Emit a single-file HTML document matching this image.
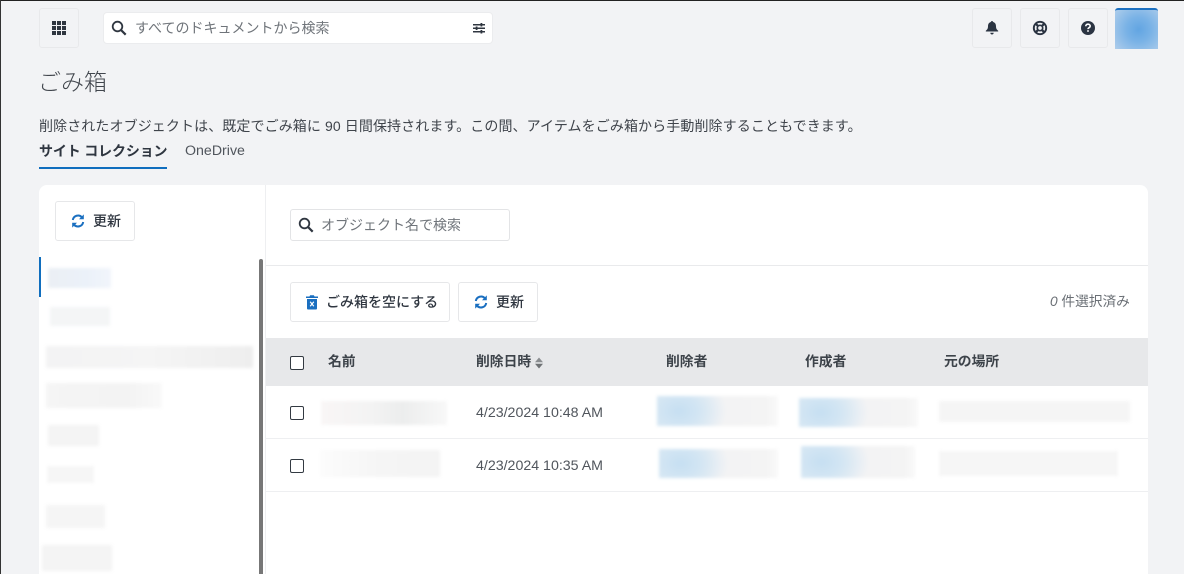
<!DOCTYPE html>
<html lang="ja">
<head>
<meta charset="utf-8">
<title>ごみ箱</title>
<style>
html,body{margin:0;padding:0;width:1184px;height:574px;overflow:hidden;}
body{background:#f2f3f5;position:relative;font-family:"Liberation Sans","Noto Sans CJK JP",sans-serif;color:#2f3640;}
.a{position:absolute;box-sizing:border-box;}
.t{position:absolute;white-space:nowrap;line-height:20px;}
.ib{position:absolute;box-sizing:border-box;width:40px;height:40px;top:8px;border:1px solid #e8e9eb;border-radius:3px;background:#f2f3f5;}
.ib svg{position:absolute;left:9px;top:9px;}
.btn{position:absolute;box-sizing:border-box;height:40px;background:#fff;border:1px solid #e6e7e9;border-radius:3px;}
.cb{position:absolute;box-sizing:border-box;width:14px;height:14px;border:1.3px solid #333a42;border-radius:2px;background:#fff;}
.b{position:absolute;filter:blur(1.5px);}
.g1{background:linear-gradient(90deg,#f9f6f6,#f3f3f3 40%,#eceded 65%,#f8f8f8);}
.row-blue{background:radial-gradient(ellipse 48px 36px at 18% 50%,#c6dff2 0%,#d2e5f3 40%,rgba(243,244,245,0) 100%),linear-gradient(90deg,#e0ecf5,#f3f3f4 50%,#f4f4f4 90%,#f9f9f9);}
.h{font-size:13.800px;font-weight:700;color:#3d434a;top:352px;}
</style>
</head>
<body>
<div class="a" style="left:0;top:0;width:1184px;height:1px;background:#222;"></div>
<div class="a" style="left:0;top:0;width:1px;height:574px;background:#333;"></div>

<div class="ib" style="left:39px;">
<svg width="20" height="20" viewBox="0 0 20 20" fill="#2f3640"><rect x="3" y="3" width="4" height="4"/><rect x="8" y="3" width="4" height="4"/><rect x="13" y="3" width="4" height="4"/><rect x="3" y="8" width="4" height="4"/><rect x="8" y="8" width="4" height="4"/><rect x="13" y="8" width="4" height="4"/><rect x="3" y="13" width="4" height="4"/><rect x="8" y="13" width="4" height="4"/><rect x="13" y="13" width="4" height="4"/></svg>
</div>

<div class="a" style="left:103px;top:12px;width:390px;height:32px;background:#fff;border:1px solid #ebecee;border-radius:4px;"></div>
<svg class="a" style="left:111px;top:20px" width="16" height="16" viewBox="0 0 16 16" fill="none" stroke="#2f3640" stroke-width="1.800"><circle cx="6.500" cy="6.500" r="4.800"/><path d="M10 10l4.700 4.700" stroke-width="2.200"/></svg>
<div class="t" style="left:135px;top:18px;font-size:14px;color:#6f747a;">すべてのドキュメントから検索</div>
<svg class="a" style="left:472px;top:22px" width="14" height="13" viewBox="0 0 14 13" fill="#2f3640"><rect x="1" y="2" width="12" height="1.500"/><rect x="8.500" y="1" width="1.800" height="3.500"/><rect x="1" y="5.500" width="12" height="1.500"/><rect x="3.700" y="4.500" width="1.800" height="3.500"/><rect x="1" y="9" width="12" height="1.500"/><rect x="8.500" y="8" width="1.800" height="3.500"/></svg>

<div class="ib" style="left:972px;">
<svg width="20" height="20" viewBox="0 0 20 20" fill="#2b3442"><path d="M10 3c.7 0 1.100.5 1.100 1 2 .5 2.900 2.200 2.900 4.200 0 2.400.8 3.400 2.200 4.500v.8H3.800v-.8c1.400-1.100 2.200-2.100 2.200-4.500 0-2 .9-3.700 2.900-4.200 0-.5.4-1 1.100-1z"/><path d="M8.300 14.800h3.400c0 1-.8 1.700-1.700 1.700s-1.700-.7-1.700-1.700z"/></svg>
</div>
<div class="ib" style="left:1020px;">
<svg width="20" height="20" viewBox="0 0 20 20" fill="none" stroke="#2b3442"><circle cx="10" cy="10" r="6.200" stroke-width="1.900"/><circle cx="10" cy="10" r="2.700" stroke-width="1.700"/><path d="M5.800 5.800l2.400 2.400M14.200 5.800l-2.400 2.400M5.800 14.200l2.400-2.400M14.200 14.200l-2.400-2.400" stroke-width="2.200"/></svg>
</div>
<div class="ib" style="left:1068px;">
<svg width="20" height="20" viewBox="0 0 20 20"><circle cx="10" cy="10" r="7" fill="#2b3442"/><path d="M7.800 8.200c0-1.300 1-2 2.200-2s2.200.7 2.200 1.900c0 1.600-2.200 1.500-2.200 3" fill="none" stroke="#fff" stroke-width="1.600"/><rect x="9.200" y="12.200" width="1.600" height="1.600" fill="#fff"/></svg>
</div>
<div class="a" style="left:1115px;top:8px;width:43px;height:41px;background:radial-gradient(circle at 55% 50%,#62a5e2 0%,#79b2e6 40%,#aecdeb 100%);border-top:2px solid #1a6fc0;border-radius:3px 3px 0 0;"></div>

<div class="t" style="left:38px;top:70px;font-size:23px;line-height:24px;color:#41464d;font-weight:300;">ごみ箱</div>
<div class="t" style="left:39px;top:116px;font-size:14px;letter-spacing:.1px;color:#3f444b;">削除されたオブジェクトは、既定でごみ箱に 90 日間保持されます。この間、アイテムをごみ箱から手動削除することもできます。</div>
<div class="t" style="left:39px;top:141px;font-size:14px;letter-spacing:-.15px;font-weight:700;color:#2f3640;">サイト コレクション</div>
<div class="a" style="left:39px;top:167px;width:128px;height:2px;background:#106ebe;"></div>
<div class="t" style="left:185px;top:141px;font-size:14.200px;color:#50555c;">OneDrive</div>

<!-- card -->
<div class="a" style="left:39px;top:185px;width:1109px;height:389px;background:#fff;border-radius:8px 8px 0 0;"></div>
<div class="a" style="left:265px;top:185px;width:1px;height:389px;background:#eeeff1;"></div>

<div class="btn" style="left:55px;top:201px;width:80px;">
<svg class="a" style="left:15px;top:12px" width="14" height="14" viewBox="0 0 14 14" fill="none" stroke="#1a6fc0" stroke-width="2"><path d="M1.800 6A5.300 5.300 0 0 1 11 3.300"/><path d="M12.200 8A5.300 5.300 0 0 1 3 10.700"/><path d="M12.800 .4v4.800H8z" fill="#1a6fc0" stroke="none"/><path d="M1.200 13.600V8.800H6z" fill="#1a6fc0" stroke="none"/></svg>
<div class="t" style="left:37px;top:9px;font-size:14px;font-weight:500;color:#2f3640;">更新</div>
</div>

<div class="a" style="left:39px;top:257px;width:2px;height:40px;background:#106ebe;"></div>
<div class="a" style="left:259px;top:259px;width:4px;height:315px;background:#777;border-radius:2px 2px 0 0;"></div>

<div class="b" style="left:48px;top:268px;width:63px;height:20px;background:linear-gradient(90deg,#ebeff4,#ebf1f9 60%,#f1f5fb);"></div>
<div class="b" style="left:50px;top:307px;width:60px;height:19px;background:#f4f5f6;"></div>
<div class="b" style="left:46px;top:346px;width:207px;height:22px;background:linear-gradient(90deg,#f3f3f4,#f5f5f5 50%,#eeeeee);"></div>
<div class="b" style="left:46px;top:383px;width:116px;height:25px;background:linear-gradient(90deg,#f5f5f5,#f3f3f3 70%,#f9f9f9);"></div>
<div class="b" style="left:48px;top:425px;width:51px;height:21px;background:#f4f4f4;"></div>
<div class="b" style="left:47px;top:466px;width:47px;height:17px;background:#f6f6f6;"></div>
<div class="b" style="left:46px;top:505px;width:59px;height:23px;background:#f5f5f5;"></div>
<div class="b" style="left:42px;top:545px;width:70px;height:26px;background:#f4f4f4;"></div>

<!-- right panel -->
<div class="a" style="left:290px;top:209px;width:220px;height:32px;background:#fff;border:1px solid #e3e4e6;border-radius:3px;"></div>
<svg class="a" style="left:298px;top:217px" width="16" height="16" viewBox="0 0 16 16" fill="none" stroke="#2f3640" stroke-width="1.800"><circle cx="6.500" cy="6.500" r="4.800"/><path d="M10 10l4.700 4.700" stroke-width="2.200"/></svg>
<div class="t" style="left:321px;top:215px;font-size:14px;color:#6f747a;">オブジェクト名で検索</div>
<div class="a" style="left:266px;top:265px;width:882px;height:1px;background:#e9eaec;"></div>

<div class="btn" style="left:290px;top:282px;width:160px;">
<svg class="a" style="left:14px;top:11px" width="14" height="16" viewBox="0 0 14 16"><path d="M1 2.500h3.500l.6-1.200h3.800l.6 1.200H13v1.500H1z" fill="#1a6fc0"/><path d="M2 5h10v9.500a1 1 0 0 1-1 1H3a1 1 0 0 1-1-1z" fill="#1a6fc0"/><path d="M5.200 7.800l3.600 4.400M8.800 7.800l-3.600 4.400" stroke="#fff" stroke-width="1.200"/></svg>
<div class="t" style="left:35px;top:9px;font-size:14px;font-weight:500;color:#2f3640;">ごみ箱を空にする</div>
</div>
<div class="btn" style="left:458px;top:282px;width:80px;">
<svg class="a" style="left:15px;top:12px" width="14" height="14" viewBox="0 0 14 14" fill="none" stroke="#1a6fc0" stroke-width="2"><path d="M1.800 6A5.300 5.300 0 0 1 11 3.300"/><path d="M12.200 8A5.300 5.300 0 0 1 3 10.700"/><path d="M12.800 .4v4.800H8z" fill="#1a6fc0" stroke="none"/><path d="M1.200 13.600V8.800H6z" fill="#1a6fc0" stroke="none"/></svg>
<div class="t" style="left:37px;top:9px;font-size:14px;font-weight:500;color:#2f3640;">更新</div>
</div>
<div class="t" style="left:1050px;top:292px;font-size:13.700px;color:#6a6f75;"><i>0</i> 件選択済み</div>

<!-- table -->
<div class="a" style="left:266px;top:338px;width:882px;height:48px;background:#e7e8ea;"></div>
<div class="cb" style="left:290px;top:356px;"></div>
<div class="t h" style="left:328px;">名前</div>
<div class="t h" style="left:476px;">削除日時</div>
<svg class="a" style="left:534px;top:357px" width="10" height="12" viewBox="0 0 10 12"><path d="M5 .5L9 5.200H1z" fill="#8a8d90"/><path d="M5 11.500L1 6.800h8z" fill="#6f7275"/></svg>
<div class="t h" style="left:666px;">削除者</div>
<div class="t h" style="left:805px;">作成者</div>
<div class="t h" style="left:944px;">元の場所</div>

<div class="a" style="left:266px;top:438px;width:882px;height:1px;background:#eeeff1;"></div>
<div class="a" style="left:266px;top:491px;width:882px;height:1px;background:#eeeff1;"></div>

<div class="cb" style="left:290px;top:406px;"></div>
<div class="b g1" style="left:321px;top:401px;width:126px;height:24px;"></div>
<div class="t" style="left:476px;top:403px;font-size:14.200px;color:#50555c;">4/23/2024 10:48 AM</div>
<div class="b row-blue" style="left:657px;top:396px;width:121px;height:30px;"></div>
<div class="b row-blue" style="left:799px;top:398px;width:119px;height:29px;"></div>
<div class="b" style="left:939px;top:401px;width:191px;height:21px;background:#f5f5f5;"></div>

<div class="cb" style="left:290px;top:459px;"></div>
<div class="b" style="left:320px;top:450px;width:120px;height:27px;background:linear-gradient(90deg,#fcfcfc,#f5f5f5 50%,#f4f4f4);"></div>
<div class="t" style="left:476px;top:456px;font-size:14.200px;color:#50555c;">4/23/2024 10:35 AM</div>
<div class="b row-blue" style="left:659px;top:449px;width:119px;height:29px;"></div>
<div class="b row-blue" style="left:801px;top:446px;width:114px;height:32px;"></div>
<div class="b" style="left:939px;top:451px;width:179px;height:25px;background:#f6f6f6;"></div>
</body>
</html>
